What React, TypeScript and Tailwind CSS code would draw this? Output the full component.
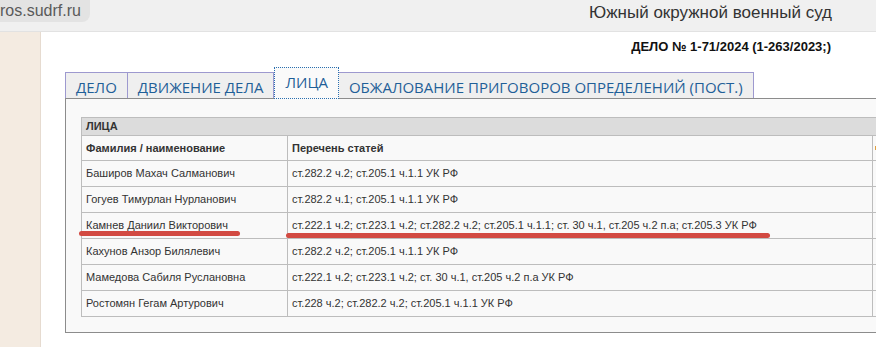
import React from "react";

const rows: [string, string][] = [
  ["Баширов Махач Салманович", "ст.282.2 ч.2; ст.205.1 ч.1.1 УК РФ"],
  ["Гогуев Тимурлан Нурланович", "ст.282.2 ч.1; ст.205.1 ч.1.1 УК РФ"],
  [
    "Камнев Даниил Викторович",
    "ст.222.1 ч.2; ст.223.1 ч.2; ст.282.2 ч.2; ст.205.1 ч.1.1; ст. 30 ч.1, ст.205 ч.2 п.а; ст.205.3 УК РФ",
  ],
  ["Кахунов Анзор Билялевич", "ст.282.2 ч.2; ст.205.1 ч.1.1 УК РФ"],
  ["Мамедова Сабиля Руслановна", "ст.222.1 ч.2; ст.223.1 ч.2; ст. 30 ч.1, ст.205 ч.2 п.а УК РФ"],
  ["Ростомян Гегам Артурович", "ст.228 ч.2; ст.282.2 ч.2; ст.205.1 ч.1.1 УК РФ"],
];

export default function App() {
  return (
    <div className="relative w-[876px] h-[347px] overflow-hidden bg-white font-['Liberation_Sans',Arial,sans-serif]">
      {/* top bar */}
      <div className="h-[32px] bg-[#f0f0f0] border-b border-[#e2e2e2] flex items-start justify-between">
        <div className="h-[22px] w-[90px] bg-[#e3e3e3] rounded-br-[8px] flex items-center text-[16px] text-[#5a5a5a] leading-none pl-0">
          ros.sudrf.ru
        </div>
        <div className="mt-[4px] mr-[44px] text-[17px] leading-[18px] text-[#333]">
          Южный окружной военный суд
        </div>
      </div>
      {/* body */}
      <div className="flex h-[315px]">
        <div className="w-[41px] shrink-0 bg-[#f4ebe1] border-r border-[#e6dbd0]" />
        <div className="flex-1 overflow-hidden">
          <div className="flex justify-end pr-[45px] pt-[7px] text-[13px] leading-[15px] font-bold text-[#111]">
            ДЕЛО № 1-71/2024 (1-263/2023;)
          </div>
          <div className="ml-[24px] mt-[12px] w-[960px]">
            {/* tabs */}
            <div className="flex items-end h-[32px] font-['Open_Sans',sans-serif] text-[15px] text-[#1f5f98]">
              <div className="h-[26px] px-[10px] border border-b-0 border-[#9d99cf] bg-[#efefef] flex items-center pt-[3px]">
                ДЕЛО
              </div>
              <div className="h-[26px] px-[10px] border border-l-0 border-b-0 border-[#9d99cf] bg-[#efefef] flex items-center pt-[3px]">
                ДВИЖЕНИЕ ДЕЛА
              </div>
              <div className="relative z-10 -mb-[1px] h-[32px] px-[10px] border border-dotted border-[#2a6fb0] bg-[#fafafa] flex items-start pt-[3px]">
                ЛИЦА
              </div>
              <div className="h-[26px] px-[10px] border border-l-0 border-b-0 border-[#9d99cf] bg-[#efefef] flex items-center pt-[3px]">
                ОБЖАЛОВАНИЕ ПРИГОВОРОВ ОПРЕДЕЛЕНИЙ (ПОСТ.)
              </div>
            </div>
            {/* panel */}
            <div className="border border-[#8c8c8c] bg-[#f9f9f9] pl-[15px] pt-[18px] pb-[15px]">
              <table className="border-collapse text-[11px] text-[#333]">
                <tbody>
                  <tr className="h-[18px] bg-[#dcdcdc]">
                    <td colSpan={3} className="border border-[#bdbdbd] px-[4px] font-bold leading-[13px]">
                      ЛИЦА
                    </td>
                  </tr>
                  <tr className="h-[25px]">
                    <td className="w-[206px] border border-[#bdbdbd] px-[4px] font-bold">Фамилия / наименование</td>
                    <td className="w-[585px] border border-[#bdbdbd] px-[4px] font-bold">Перечень статей</td>
                    <td className="w-[60px] border border-[#bdbdbd] px-[2px] align-middle">
                      <span className="block w-[2px] h-[4px] bg-[#e0a040]" />
                    </td>
                  </tr>
                  {rows.map(([n, s]) => (
                    <tr key={n} className="h-[26px]">
                      <td className="border border-[#bdbdbd] px-[4px] whitespace-nowrap">{n}</td>
                      <td className="border border-[#bdbdbd] px-[4px] whitespace-nowrap">{s}</td>
                      <td className="border border-[#bdbdbd]" />
                    </tr>
                  ))}
                </tbody>
              </table>
            </div>
          </div>
        </div>
      </div>
      {/* red annotation underlines */}
      <div className="absolute left-[79px] top-[231px] w-[161px] h-[5px] rounded-full bg-[#d24a42]" />
      <div className="absolute left-[286px] top-[233px] w-[484px] h-[5px] rounded-full bg-[#d24a42]" />
    </div>
  );
}
